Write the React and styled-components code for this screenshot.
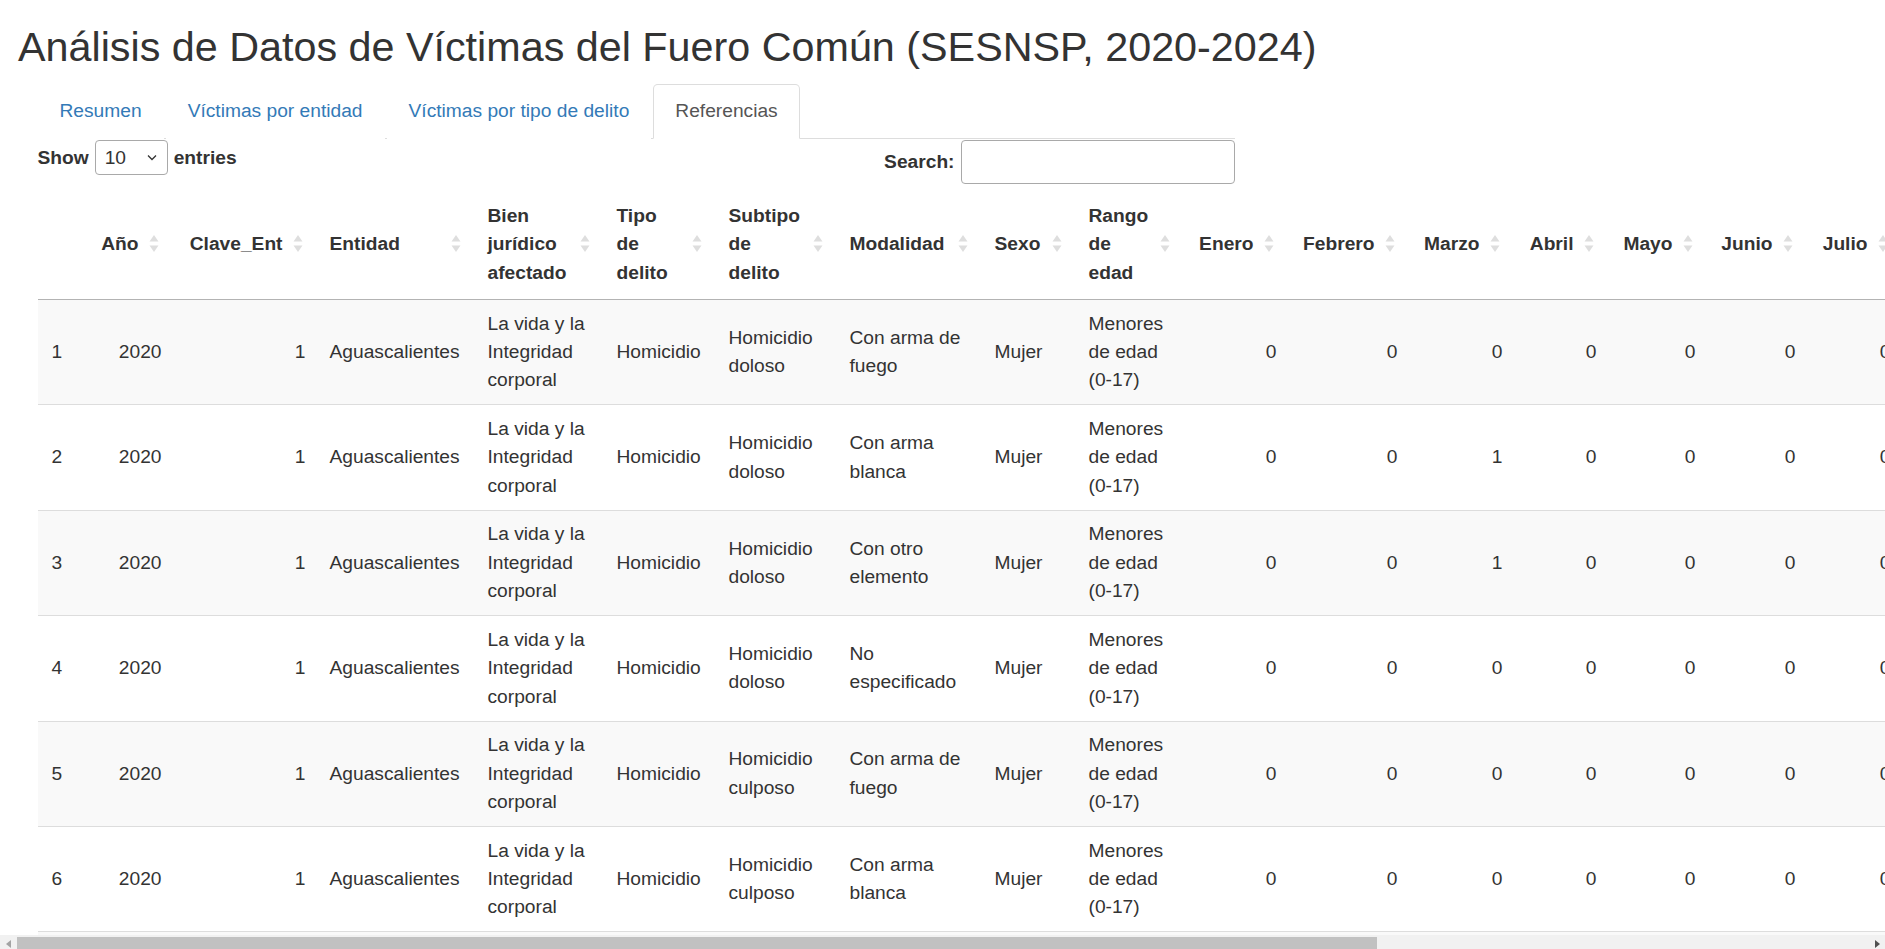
import React from 'react';
import styled, { createGlobalStyle } from 'styled-components';

const GlobalStyle = createGlobalStyle`
  *, *::before, *::after { box-sizing: border-box; }
  html, body {
    margin: 0;
    padding: 0;
    overflow: hidden;
    background: #fff;
  }
  body {
    font-family: "Liberation Sans", Arial, Helvetica, sans-serif;
    font-size: 19.2px;
    line-height: 28.4px;
    color: #333;
  }
`;

const Page = styled.div`
  padding: 0 17px 0 18px;
`;

const Title = styled.h1`
  margin: 25.3px 0 13px;
  font-size: 41.3px;
  font-weight: 400;
  line-height: 1.1;
  color: #333;
  white-space: nowrap;
`;

const MainPanel = styled.div`
  margin-left: 19.5px;
  width: 1197px;
`;

const TabList = styled.ul`
  display: flex;
  list-style: none;
  margin: 0;
  padding: 0;
  border-bottom: 1px solid #ddd;
`;

const TabItem = styled.li`
  margin: 0 2px -1px 0;
`;

const TabLink = styled.a`
  display: block;
  padding: 12.6px 21px;
  line-height: 28.4px;
  border: 1px solid ${(p) => (p.$active ? '#ddd' : 'transparent')};
  border-bottom-color: transparent;
  border-radius: 4.8px 4.8px 0 0;
  background: #fff;
  color: ${(p) => (p.$active ? '#555' : '#337ab7')};
  text-decoration: none;
  cursor: pointer;
  white-space: nowrap;
`;

const Controls = styled.div`
  display: flex;
  justify-content: space-between;
  align-items: flex-start;
  padding-top: 1px;
`;

const LengthLabel = styled.label`
  display: flex;
  align-items: center;
  gap: 6px;
  height: 35px;
  font-weight: 700;
`;

const SelectBox = styled.div`
  display: flex;
  align-items: center;
  justify-content: space-between;
  width: 73px;
  height: 35px;
  padding: 0 10px 0 9px;
  border: 1px solid #a9a9a9;
  border-radius: 4px;
  background: #fff;
  font-weight: 400;
`;

const FilterLabel = styled.label`
  display: flex;
  align-items: center;
  gap: 6px;
  font-weight: 700;
`;

const SearchInput = styled.input`
  width: 274px;
  height: 44px;
  border: 1px solid #a9a9a9;
  border-radius: 4px;
  padding: 0 8px;
  font: inherit;
  font-weight: 400;
  outline: none;
`;

const Table = styled.table`
  table-layout: fixed;
  border-collapse: separate;
  border-spacing: 0;
  margin-top: 5.5px;
  width: ${(p) => p.$width}px;
`;

const Col = styled.col`
  width: ${(p) => p.$w}px;
`;

const Th = styled.th`
  position: relative;
  padding: 12px ${(p) => (p.$sortable ? 35 : 12)}px 12px 12px;
  text-align: ${(p) => (p.$num ? 'right' : 'left')};
  vertical-align: middle;
  font-weight: 700;
  line-height: 28.4px;
  border-bottom: 1px solid #b3b3b3;
`;

const SortIcon = styled.svg`
  position: absolute;
  right: 15px;
  top: 50%;
  transform: translateY(-50%);
  width: 10px;
  height: 20px;
`;

const Tr = styled.tr`
  background: ${(p) => (p.$odd ? '#f9f9f9' : '#fff')};
`;

const Td = styled.td`
  padding: 9.6px 12px 9.6px ${(p) => (p.$index ? 14 : 12)}px;
  text-align: ${(p) => (p.$num ? 'right' : 'left')};
  vertical-align: middle;
  line-height: 28.4px;
  border-bottom: 1px solid #ddd;
`;

const HScroll = styled.div`
  position: fixed;
  left: 0;
  right: 0;
  bottom: -3px;
  height: 17px;
  display: flex;
  background: #f1f1f1;
`;

const ScrollArrow = styled.div`
  flex: 0 0 17px;
  display: flex;
  align-items: center;
  justify-content: center;
`;

const ScrollTrack = styled.div`
  flex: 1;
  padding: 2px 0;
`;

const ScrollThumb = styled.div`
  height: 100%;
  width: ${(p) => p.$pct}%;
  background: #c1c1c1;
`;

const columns = [
  { label: '', w: 49, sortable: false, index: true },
  { label: 'Año', w: 87, num: true },
  { label: 'Clave_Ent', w: 144, num: true },
  { label: 'Entidad', w: 158 },
  { label: 'Bien jurídico afectado', w: 129 },
  { label: 'Tipo de delito', w: 112 },
  { label: 'Subtipo de delito', w: 121 },
  { label: 'Modalidad', w: 145 },
  { label: 'Sexo', w: 94 },
  { label: 'Rango de edad', w: 108 },
  { label: 'Enero', w: 104, num: true },
  { label: 'Febrero', w: 121, num: true },
  { label: 'Marzo', w: 105, num: true },
  { label: 'Abril', w: 94, num: true },
  { label: 'Mayo', w: 99, num: true },
  { label: 'Junio', w: 100, num: true },
  { label: 'Julio', w: 95, num: true },
  { label: 'Agosto', w: 118, num: true },
  { label: 'Septiembre', w: 157, num: true },
  { label: 'Octubre', w: 126, num: true },
  { label: 'Noviembre', w: 151, num: true },
  { label: 'Diciembre', w: 145, num: true },
];

const zeros = [0, 0, 0, 0, 0, 0, 0, 0, 0, 0, 0, 0];
const marchOne = [0, 0, 1, 0, 0, 0, 0, 0, 0, 0, 0, 0];

const records = [
  ['Homicidio', 'Homicidio doloso', 'Con arma de fuego', zeros],
  ['Homicidio', 'Homicidio doloso', 'Con arma blanca', marchOne],
  ['Homicidio', 'Homicidio doloso', 'Con otro elemento', marchOne],
  ['Homicidio', 'Homicidio doloso', 'No especificado', zeros],
  ['Homicidio', 'Homicidio culposo', 'Con arma de fuego', zeros],
  ['Homicidio', 'Homicidio culposo', 'Con arma blanca', zeros],
  ['Homicidio', 'Homicidio culposo', 'Con otro elemento', zeros],
  ['Homicidio', 'Homicidio culposo', 'No especificado', zeros],
  ['Lesiones', 'Lesiones dolosas', 'Con arma de fuego', zeros],
  ['Lesiones', 'Lesiones dolosas', 'Con arma blanca', zeros],
];

const rows = records.map(([tipo, subtipo, modalidad, months], i) => [
  i + 1,
  2020,
  1,
  'Aguascalientes',
  'La vida y la Integridad corporal',
  tipo,
  subtipo,
  modalidad,
  'Mujer',
  'Menores de edad (0-17)',
  ...months,
]);

const tableWidth = columns.reduce((s, c) => s + c.w, 0);

const tabs = ['Resumen', 'Víctimas por entidad', 'Víctimas por tipo de delito', 'Referencias'];

function SortArrows() {
  return (
    <SortIcon viewBox="0 0 10 20">
      <polygon points="0.5,7.5 5,1 9.5,7.5" fill="#dedede" />
      <polygon points="0.5,11.5 9.5,11.5 5,18" fill="#dedede" />
    </SortIcon>
  );
}

function Chevron() {
  return (
    <svg width="10" height="7" viewBox="0 0 10 7">
      <path d="M1 1.5 L5 5.5 L9 1.5" fill="none" stroke="#333" strokeWidth="1.3" />
    </svg>
  );
}

export default function App() {
  return (
    <>
      <GlobalStyle />
      <Page>
        <Title>Análisis de Datos de Víctimas del Fuero Común (SESNSP, 2020-2024)</Title>
        <MainPanel>
          <TabList>
            {tabs.map((t) => (
              <TabItem key={t}>
                <TabLink $active={t === 'Referencias'}>{t}</TabLink>
              </TabItem>
            ))}
          </TabList>
          <Controls>
            <LengthLabel>
              Show
              <SelectBox>
                10
                <Chevron />
              </SelectBox>
              entries
            </LengthLabel>
            <FilterLabel>
              Search:
              <SearchInput type="search" />
            </FilterLabel>
          </Controls>
          <Table $width={tableWidth}>
            <colgroup>
              {columns.map((c, i) => (
                <Col key={i} $w={c.w} />
              ))}
            </colgroup>
            <thead>
              <tr>
                {columns.map((c, i) => {
                  const sortable = c.sortable !== false;
                  return (
                    <Th key={i} $num={c.num} $sortable={sortable}>
                      {c.label}
                      {sortable && <SortArrows />}
                    </Th>
                  );
                })}
              </tr>
            </thead>
            <tbody>
              {rows.map((r, ri) => (
                <Tr key={ri} $odd={ri % 2 === 0}>
                  {r.map((v, ci) => (
                    <Td key={ci} $num={columns[ci].num} $index={columns[ci].index}>
                      {v}
                    </Td>
                  ))}
                </Tr>
              ))}
            </tbody>
          </Table>
        </MainPanel>
      </Page>
      <HScroll>
        <ScrollArrow>
          <svg width="6" height="8" viewBox="0 0 6 8">
            <polygon points="5,0 5,8 0,4" fill="#a3a3a3" />
          </svg>
        </ScrollArrow>
        <ScrollTrack>
          <ScrollThumb $pct={73.5} />
        </ScrollTrack>
        <ScrollArrow>
          <svg width="6" height="8" viewBox="0 0 6 8">
            <polygon points="1,0 6,4 1,8" fill="#505050" />
          </svg>
        </ScrollArrow>
      </HScroll>
    </>
  );
}
